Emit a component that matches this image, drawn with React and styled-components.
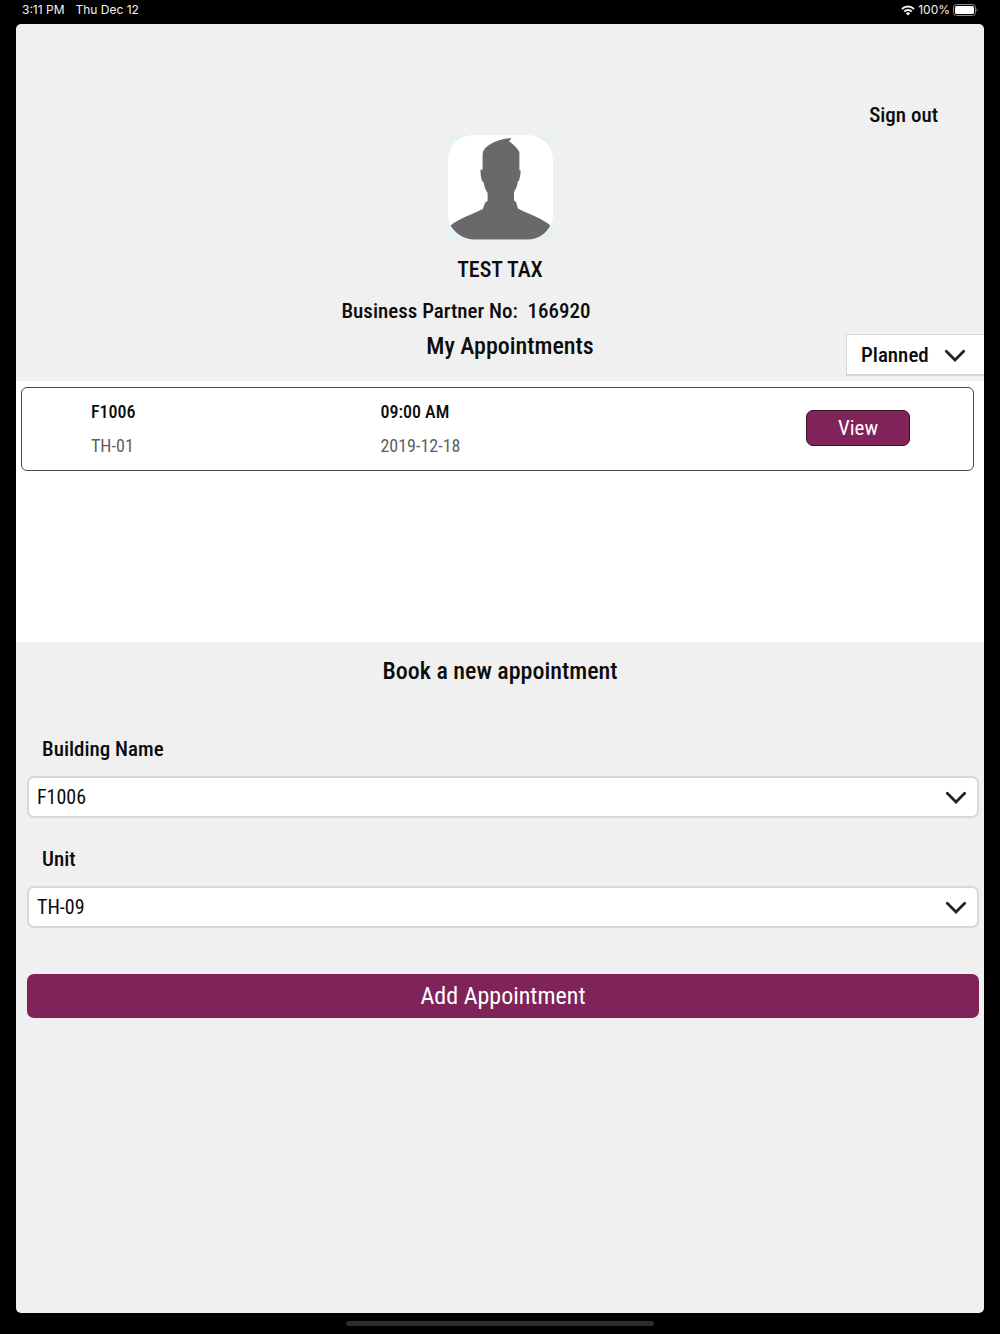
import React, { useId, useState } from 'react';
import styled, { createGlobalStyle, css } from 'styled-components';

const colors = {
  primary: '#7f2359',
  surface: '#f0f0f0',
  white: '#ffffff',
  text: '#0c0c0c',
  muted: '#5f5f5f',
  border: '#d8d8d8',
  outline: '#4a4a4a',
};

const fonts = {
  body: "'Roboto Condensed', 'Liberation Sans Narrow', Roboto, sans-serif",
  system: "Inter, Roboto, sans-serif",
};

const fontSize = {
  sm: '18px',
  md: '20px',
  base: '21px',
  name: '22px',
  lg: '24px',
};

const GlobalStyle = createGlobalStyle`
  *, *::before, *::after {
    box-sizing: border-box;
  }

  body {
    margin: 0;
    background: #000;
    color: ${colors.text};
    font-family: ${fonts.body};
    font-weight: 500;
  }

  h1, h2, p {
    margin: 0;
  }
`;

const Device = styled.div`
  display: flex;
  flex-direction: column;
  min-height: 100vh;
  padding: 0 16px;
`;

const StatusBar = styled.div`
  display: flex;
  align-items: center;
  justify-content: space-between;
  height: 24px;
  padding: 0 6px 4px;
  color: #f2f2f2;
  font-family: ${fonts.system};
  font-size: 12px;
  font-weight: 400;
  line-height: 16px;
`;

const StatusGroup = styled.div`
  display: flex;
  align-items: center;
  gap: ${({ $gap }) => $gap}px;
`;

const Screen = styled.main`
  display: flex;
  flex: 1;
  flex-direction: column;
  overflow: hidden;
  border-radius: 5px;
  background: ${colors.surface};
`;

const HomeArea = styled.div`
  display: flex;
  justify-content: center;
  height: 21px;
  padding-top: 8px;
`;

const HomeIndicator = styled.div`
  width: 308px;
  height: 5px;
  border-radius: 3px;
  background: #2d2d2d;
`;

const Header = styled.header`
  display: flex;
  flex-direction: column;
  align-items: center;
  padding: 76px 0 5px;
`;

const SignOut = styled.button`
  align-self: flex-end;
  margin-right: 46px;
  padding: 0;
  border: 0;
  background: none;
  color: ${colors.text};
  font-family: inherit;
  font-size: ${fontSize.base};
  font-weight: 500;
  line-height: 30px;
  cursor: pointer;
`;

const Avatar = styled.svg`
  width: 105px;
  height: 105px;
  margin-top: 5px;
`;

const PartnerName = styled.h1`
  margin-top: 15px;
  font-size: ${fontSize.name};
  font-weight: 500;
  line-height: 30px;
`;

const PartnerNumber = styled.p`
  margin-top: 11px;
  padding-right: 68px;
  font-size: ${fontSize.base};
  line-height: 30px;
  white-space: pre;
`;

const TitleRow = styled.div`
  display: grid;
  grid-template-columns: 138px 1fr 138px;
  width: 100%;
  padding-top: 8px;
`;

const SectionTitle = styled.h2`
  font-size: ${fontSize.lg};
  font-weight: 500;
  line-height: 24px;
  text-align: center;
`;

const ListTitle = styled(SectionTitle)`
  grid-column: 2;
  padding-left: 20px;
`;

const SelectBox = styled.div`
  position: relative;
`;

const StyledSelect = styled.select`
  display: block;
  width: 100%;
  height: 42px;
  appearance: none;
  background: ${colors.white};
  color: ${colors.text};
  font-family: inherit;
  cursor: pointer;

  ${({ $variant }) =>
    $variant === 'flat'
      ? css`
          padding: 0 44px 0 14px;
          border: solid ${colors.border};
          border-width: 1px 0 2px 1px;
          border-radius: 0;
          font-size: ${fontSize.base};
          font-weight: 500;
        `
      : css`
          padding: 0 44px 0 8px;
          border: 2px solid ${colors.border};
          border-radius: 7px;
          font-size: ${fontSize.md};
          font-weight: 400;
        `}
`;

const Chevron = styled.svg`
  position: absolute;
  top: 50%;
  right: ${({ $right }) => $right}px;
  width: 22px;
  height: 14px;
  margin-top: -6px;
  pointer-events: none;
`;

const AppointmentList = styled.section`
  min-height: 261px;
  padding: 6px 10px 6px 5px;
  background: ${colors.white};
`;

const AppointmentCard = styled.article`
  display: grid;
  grid-template-columns: 34fr 50fr 104px;
  align-items: center;
  height: 84px;
  padding: 0 63px 0 69px;
  border: 1px solid ${colors.outline};
  border-radius: 6px;
`;

const CardColumn = styled.div`
  display: flex;
  flex-direction: column;
  gap: 4px;
  font-size: ${fontSize.sm};
  line-height: 30px;
`;

const Muted = styled.span`
  color: ${colors.muted};
  font-weight: 400;
`;

const Button = styled.button`
  border: 0;
  border-radius: 7px;
  background: ${colors.primary};
  color: ${colors.white};
  font-family: inherit;
  font-weight: 400;
  cursor: pointer;
`;

const ViewButton = styled(Button)`
  height: 36px;
  margin-top: -2px;
  border: 1px solid #35122a;
  font-size: ${fontSize.base};
`;

const AddButton = styled(Button)`
  height: 44px;
  margin-top: 46px;
  font-size: ${fontSize.lg};
`;

const BookingForm = styled.form`
  display: flex;
  flex-direction: column;
  padding: 17px 5px 24px 11px;
`;

const FormTitle = styled(SectionTitle)`
  padding-right: 6px;
`;

const Field = styled.div`
  display: flex;
  flex-direction: column;
  gap: 12px;
  margin-top: ${({ $top }) => $top}px;
`;

const FieldLabel = styled.label`
  padding-left: 15px;
  font-size: ${fontSize.base};
  line-height: 30px;
`;

const appointments = [
  { building: 'F1006', unit: 'TH-01', time: '09:00 AM', date: '2019-12-18' },
];

const WifiIcon = () => (
  <svg width="14" height="11" viewBox="0 0 14 11" fill="none" stroke="#f2f2f2" strokeWidth="1.9" aria-hidden="true">
    <path d="M0.9 4a8.7 8.7 0 0 1 12.2 0" />
    <path d="M3.2 6.6a5.4 5.4 0 0 1 7.6 0" />
    <path d="M7 10.6L4.8 8.4a3.1 3.1 0 0 1 4.4 0Z" fill="#f2f2f2" stroke="none" />
  </svg>
);

const BatteryIcon = () => (
  <svg width="25" height="12" viewBox="0 0 25 12" aria-hidden="true">
    <rect x="0.5" y="0.5" width="22" height="11" rx="3" fill="none" stroke="#8a8a8a" />
    <rect x="2" y="2" width="19" height="8" rx="1.6" fill="#fff" />
    <path d="M23.6 4.2v3.6c1.3-.6 1.3-3 0-3.6Z" fill="#8a8a8a" />
  </svg>
);

const ProfilePicture = () => (
  <Avatar viewBox="0 0 105 105" role="img" aria-label="Profile picture">
    <rect width="105" height="105" fill="#e7f1f3" />
    <rect width="105" height="105" rx="25" fill="#fff" />
    <path
      d="M63.500 3.200C54 3 42 7.500 36.500 14C35 16 34.600 18 34.600 22V34.500L32.400 35C32.600 39 32.900 43 34 46L35.500 47C36.300 51 37.400 55 39.600 58V66L37.200 67.500L34.800 74C25 79 12 83 2.500 90.500C7 98 15 104.500 26 104.500H80C91 104.500 98.500 98 102.300 90.500C94 83 80 79 70 73.500L68 67L66 65.500V57C68 54 69.300 50.500 69.800 46.500L71 45.500C72.200 42 72.600 39 72.600 35.500L71.400 35V17C68.500 12 64.500 8.500 61 6.200Z"
      fill="#696969"
    />
  </Avatar>
);

const Select = ({ options, variant, chevronRight = 12, ...props }) => {
  const [value, setValue] = useState(options[0]);

  return (
    <SelectBox>
      <StyledSelect
        $variant={variant}
        value={value}
        onChange={(e) => setValue(e.target.value)}
        {...props}
      >
        {options.map((option) => (
          <option key={option}>{option}</option>
        ))}
      </StyledSelect>
      <Chevron $right={chevronRight} viewBox="0 0 22 14" fill="none" aria-hidden="true">
        <path d="M2.300 2.200L11 11L19.700 2.200" stroke="#222" strokeWidth="2.800" strokeLinecap="round" />
      </Chevron>
    </SelectBox>
  );
};

const SelectField = ({ label, options, top }) => {
  const id = useId();

  return (
    <Field $top={top}>
      <FieldLabel htmlFor={id}>{label}</FieldLabel>
      <Select id={id} options={options} />
    </Field>
  );
};

const App = () => (
  <>
    <GlobalStyle />
    <Device>
      <StatusBar>
        <StatusGroup $gap={11}>
          <span>3:11 PM</span>
          <span>Thu Dec 12</span>
        </StatusGroup>
        <StatusGroup $gap={3}>
          <WifiIcon />
          <span>100%</span>
          <BatteryIcon />
        </StatusGroup>
      </StatusBar>
      <Screen>
        <Header>
          <SignOut type="button">Sign out</SignOut>
          <ProfilePicture />
          <PartnerName>TEST TAX</PartnerName>
          <PartnerNumber>{'Business Partner No:  166920'}</PartnerNumber>
          <TitleRow>
            <ListTitle>My Appointments</ListTitle>
            <Select
              variant="flat"
              chevronRight={18}
              aria-label="Appointment status"
              options={['Planned', 'Completed', 'Cancelled']}
            />
          </TitleRow>
        </Header>
        <AppointmentList>
          {appointments.map(({ building, unit, time, date }) => (
            <AppointmentCard key={`${building}-${unit}`}>
              <CardColumn>
                <span>{building}</span>
                <Muted>{unit}</Muted>
              </CardColumn>
              <CardColumn>
                <span>{time}</span>
                <Muted>{date}</Muted>
              </CardColumn>
              <ViewButton type="button">View</ViewButton>
            </AppointmentCard>
          ))}
        </AppointmentList>
        <BookingForm onSubmit={(e) => e.preventDefault()}>
          <FormTitle>Book a new appointment</FormTitle>
          <SelectField label="Building Name" options={['F1006']} top={51} />
          <SelectField label="Unit" options={['TH-09', 'TH-01']} top={26} />
          <AddButton type="submit">Add Appointment</AddButton>
        </BookingForm>
      </Screen>
      <HomeArea>
        <HomeIndicator />
      </HomeArea>
    </Device>
  </>
);

export default App;
